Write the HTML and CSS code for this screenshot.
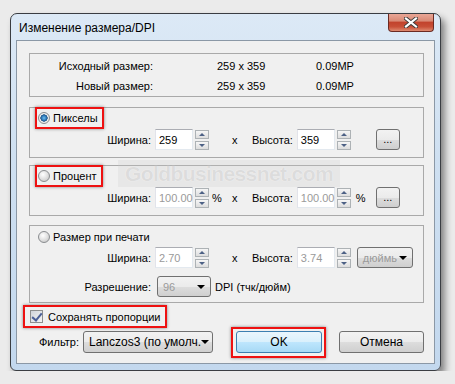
FILE: index.html
```html
<!DOCTYPE html>
<html lang="ru">
<head>
  <meta charset="UTF-8" />
  <title>Изменение размера/DPI</title>
  <link rel="stylesheet" href="styles.css">
</head>
<body>
  <div class="window">
    <div class="titlebar">
      <span class="title">Изменение размера/DPI</span>
      <span class="close">
        <svg width="14" height="11" viewBox="0 0 14 11">
          <path d="M2 1.5 L12 9.5 M12 1.5 L2 9.5" stroke="#3b3b3b" stroke-width="4" stroke-linecap="square" />
          <path d="M2 1.5 L12 9.5 M12 1.5 L2 9.5" stroke="#ffffff" stroke-width="2.2" stroke-linecap="square" />
        </svg>
      </span>
    </div>

    <div class="client">
      <div class="watermark">Goldbusinessnet.com</div>

      <div class="group info">
        <div class="info-row">
          <span class="info-label">Исходный размер:</span>
          <span class="info-size">259 x 359</span>
          <span>0.09MP</span>
        </div>
        <div class="info-row">
          <span class="info-label">Новый размер:</span>
          <span class="info-size">259 x 359</span>
          <span>0.09MP</span>
        </div>
      </div>

      <!-- Пикселы -->
      <div class="group g-small">
        <div class="group-head">
          <span class="mark"><span class="radio on"></span>Пикселы</span>
        </div>
        <div class="field-row">
          <span class="lbl">Ширина:</span>
          <span class="input">259</span>
          <span class="spin"><span class="spin-btn up"></span><span class="spin-btn down"></span></span>
          <span class="unit"></span>
          <span class="times">x</span>
          <span class="lbl2">Высота:</span>
          <span class="input">359</span>
          <span class="spin"><span class="spin-btn up"></span><span class="spin-btn down"></span></span>
          <span class="unit2"></span>
          <span class="btn more">...</span>
        </div>
      </div>

      <!-- Процент -->
      <div class="group g-small g-pct">
        <div class="group-head">
          <span class="mark"><span class="radio"></span>Процент</span>
        </div>
        <div class="field-row">
          <span class="lbl">Ширина:</span>
          <span class="input off">100.00</span>
          <span class="spin"><span class="spin-btn up"></span><span class="spin-btn down"></span></span>
          <span class="unit">%</span>
          <span class="times">x</span>
          <span class="lbl2">Высота:</span>
          <span class="input off">100.00</span>
          <span class="spin"><span class="spin-btn up"></span><span class="spin-btn down"></span></span>
          <span class="unit2">%</span>
          <span class="btn more">...</span>
        </div>
      </div>

      <!-- Размер при печати -->
      <div class="group g-print">
        <div class="group-head plain">
          <span class="radio"></span>Размер при печати
        </div>
        <div class="field-row">
          <span class="lbl">Ширина:</span>
          <span class="input off">2.70</span>
          <span class="spin"><span class="spin-btn up"></span><span class="spin-btn down"></span></span>
          <span class="unit"></span>
          <span class="times">x</span>
          <span class="lbl2">Высота:</span>
          <span class="input off">3.74</span>
          <span class="spin"><span class="spin-btn up"></span><span class="spin-btn down"></span></span>
          <span class="combo units off"><span class="combo-text">дюймь</span><span class="arrow"></span></span>
        </div>
        <div class="field-row dpi-row">
          <span class="lbl">Разрешение:</span>
          <span class="combo dpi off"><span class="combo-text">96</span><span class="arrow"></span></span>
          <span class="dpi-note">DPI (тчк/дюйм)</span>
        </div>
      </div>

      <div class="keep-row">
        <span class="mark keep"><span class="check"></span>Сохранять пропорции</span>
      </div>

      <div class="bottom-row">
        <span class="filter-lbl">Фильтр:</span>
        <span class="combo filter"><span class="combo-text">Lanczos3 (по умолч.</span><span class="arrow"></span></span>
        <span class="ok-mark"><span class="btn ok">OK</span></span>
        <span class="btn cancel">Отмена</span>
      </div>
    </div>
  </div>
</body>
</html>
```

FILE: styles.css
```css
/* Win7 style dialog */
body {
  margin: 0;
  padding: 13px 0 0 10px;
  background-color: #ebebeb;
  font-family: "Liberation Sans", Arial, sans-serif;
  font-size: 11px;
  color: #000;
}

.window {
  box-sizing: border-box;
  width: 431px;
  height: 358px;
  padding: 0 5px 6px 5px;
  border: 1px solid #3a3d42;
  border-radius: 7px 7px 6px 6px;
  background: linear-gradient(to bottom, #dce9f6 0%, #cfe0f1 40%, #c3d8ee 100%);
  box-shadow: 4px 5px 7px rgba(0, 0, 0, 0.45);
}

.titlebar {
  display: flex;
  align-items: flex-start;
  justify-content: space-between;
  height: 26px;
}

.title {
  margin: 7px 0 0 3px;
  font-size: 12px;
}

.close {
  display: flex;
  align-items: center;
  justify-content: center;
  width: 46px;
  height: 18px;
  margin-right: 1px;
  box-sizing: border-box;
  border: 1px solid #6b2a22;
  border-top: none;
  border-radius: 0 0 4px 4px;
  background: linear-gradient(to bottom, #e9a696 0%, #d98a76 40%, #c2432d 50%, #c84f37 75%, #de8a70 100%);
}

.client {
  position: relative;
  box-sizing: border-box;
  height: 324px;
  padding: 12px 10px 0 12px;
  border: 1px solid #8b98a6;
  background-color: #f0f0f0;
}

.watermark {
  position: absolute;
  left: 101px;
  top: 119px;
  width: 222px;
  height: 27px;
  line-height: 27px;
  background-color: rgba(200, 200, 200, 0.22);
  font-size: 21px;
  font-weight: bold;
  letter-spacing: -0.6px;
  text-align: center;
  color: #dcdcdc;
  text-shadow: 0 0 1px #fff;
}

.group {
  box-sizing: border-box;
  border: 1px solid #a9a9a9;
}

.info {
  height: 44px;
  padding-top: 2px;
}

.info-row {
  display: flex;
  align-items: center;
  height: 20px;
}

.info-label {
  width: 123px;
  text-align: right;
}

.info-size {
  width: 99px;
  margin-left: 64px;
}

.g-small {
  height: 51px;
  margin-top: 10px;
}

.g-pct {
  margin-top: 7px;
}

.g-print {
  height: 78px;
  margin-top: 9px;
}

.group-head {
  height: 21px;
  display: flex;
  align-items: flex-start;
}

.group-head.plain {
  align-items: center;
  padding-left: 8px;
}

.mark {
  display: flex;
  align-items: center;
  box-sizing: border-box;
  height: 22px;
  margin: -1px 0 0 5px;
  padding: 0 4px 0 1px;
  border: 2px solid #ee1111;
  box-shadow: 0 0 3px rgba(0, 0, 0, 0.45);
}

.radio {
  box-sizing: border-box;
  width: 12px;
  height: 12px;
  margin-right: 3px;
  border: 1px solid #8a8d90;
  border-radius: 50%;
  background: radial-gradient(circle at 40% 35%, #ffffff 0%, #e4e4e4 45%, #bfbfbf 100%);
}

.radio.on {
  background: radial-gradient(circle, #6fc0f0 0%, #2a74b5 35%, #1c4f7e 48%, #f4f4f4 55%, #d0d0d0 100%);
}

.field-row {
  display: flex;
  align-items: center;
  height: 21px;
}

.lbl {
  width: 121px;
  margin-right: 4px;
  text-align: right;
  white-space: nowrap;
}

.input {
  box-sizing: border-box;
  width: 38px;
  height: 21px;
  padding: 4px 0 0 3px;
  border: 1px solid #abadb3;
  border-color: #abadb3 #e3e9ef #e3e9ef #e2e3ea;
  background-color: #fff;
}

.input.off {
  color: #9a9a9a;
}

.spin {
  display: flex;
  flex-direction: column;
  justify-content: space-between;
  width: 14px;
  height: 20px;
  margin-left: 2px;
}

.spin-btn {
  position: relative;
  box-sizing: border-box;
  height: 9px;
  border: 1px solid #adb2b5;
  background: linear-gradient(to bottom, #f6f6f6, #dddddd);
}

.spin-btn::after {
  content: "";
  position: absolute;
  left: 3px;
  top: 2px;
  border-left: 3px solid transparent;
  border-right: 3px solid transparent;
}

.spin-btn.up::after {
  border-bottom: 3px solid #4d6185;
}

.spin-btn.down::after {
  border-top: 3px solid #4d6185;
}

.unit {
  width: 20px;
  padding-left: 3px;
}

.times {
  width: 6px;
}

.lbl2 {
  margin: 0 4px 0 14px;
}

.unit2 {
  width: 20px;
  padding-left: 5px;
}

.btn {
  display: flex;
  align-items: center;
  justify-content: center;
  box-sizing: border-box;
  height: 22px;
  border: 1px solid #707070;
  border-radius: 3px;
  background: linear-gradient(to bottom, #f2f2f2 0%, #ebebeb 50%, #dddddd 51%, #cfcfcf 100%);
  font-size: 12px;
}

.more {
  width: 24px;
  height: 21px;
  font-size: 11px;
  padding-bottom: 2px;
}

.combo {
  display: flex;
  align-items: center;
  justify-content: space-between;
  box-sizing: border-box;
  height: 21px;
  padding: 0 5px 0 5px;
  border: 1px solid #707070;
  border-radius: 3px;
  background: linear-gradient(to bottom, #f2f2f2 0%, #ebebeb 50%, #dddddd 51%, #cfcfcf 100%);
  white-space: nowrap;
}

.combo.off .combo-text {
  color: #9a9a9a;
}

.arrow {
  border-left: 4px solid transparent;
  border-right: 4px solid transparent;
  border-top: 4px solid #000;
}

.units {
  width: 56px;
  margin-left: 6px;
  padding-left: 5px;
  overflow: hidden;
}

.dpi-row {
  margin-top: 8px;
}

.dpi {
  width: 54px;
  margin-left: 2px;
}

.dpi-note {
  margin-left: 4px;
}

.keep-row {
  margin-top: 2px;
  height: 23px;
  display: flex;
}

.keep {
  height: 23px;
  margin: 0 0 0 -6px;
  padding: 0 4px 0 5px;
}

.check {
  position: relative;
  box-sizing: border-box;
  width: 13px;
  height: 13px;
  margin-right: 5px;
  border: 1px solid #8e8f8f;
  background: linear-gradient(135deg, #d0d4db, #f4f4f4);
}

.check::after {
  content: "";
  position: absolute;
  left: 3px;
  top: 0;
  width: 4px;
  height: 8px;
  border-right: 2px solid #4a5f97;
  border-bottom: 2px solid #4a5f97;
  transform: rotate(40deg);
}

.bottom-row {
  display: flex;
  align-items: center;
  height: 22px;
  margin-top: 3px;
}

.filter-lbl {
  margin-left: 10px;
  width: 40px;
  text-align: right;
}

.filter {
  width: 130px;
  height: 22px;
  margin-left: 4px;
  font-size: 12px;
}

.ok-mark {
  margin: -4px 0 -5px 18px;
  padding: 2px 2px 3px 3px;
  border: 2px solid #ee1111;
  box-shadow: 0 0 3px rgba(0, 0, 0, 0.45);
}

.ok {
  width: 86px;
  border-color: #3c7fb1;
  background: linear-gradient(to bottom, #eaf6fd 0%, #d9f0fc 50%, #bee6fd 51%, #a7d9f5 100%);
}

.cancel {
  width: 86px;
  margin-left: 13px;
}
```
